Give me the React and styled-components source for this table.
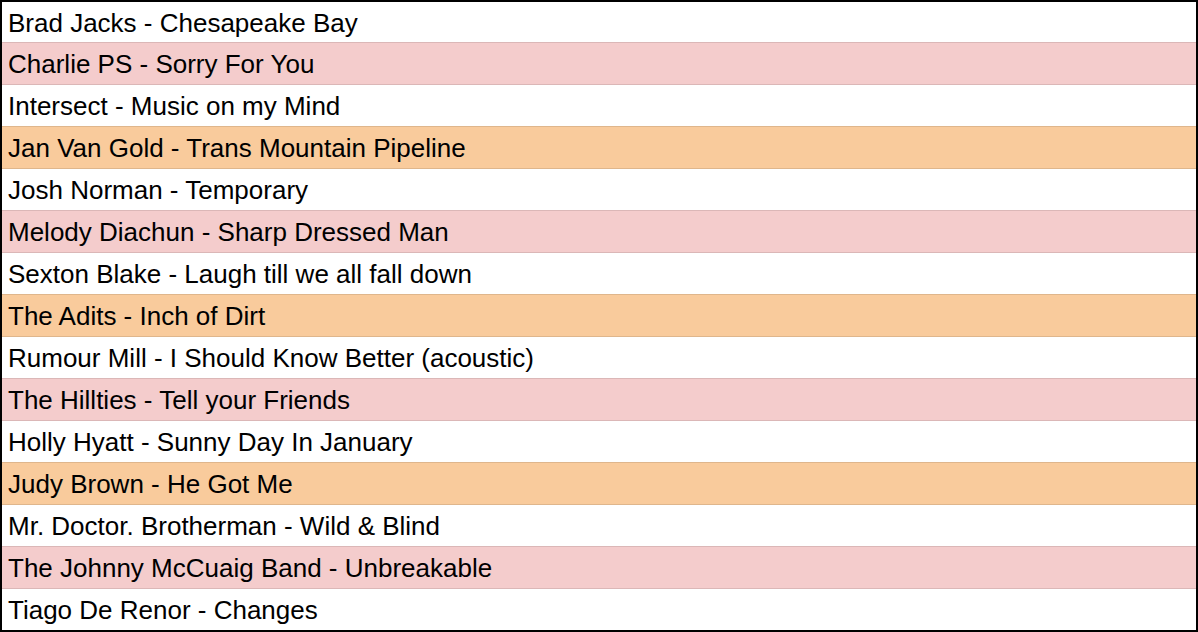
import React from "react";
import styled, { createGlobalStyle } from "styled-components";

const GlobalStyle = createGlobalStyle`
	html, body {
		margin: 0;
		padding: 0;
		background: #ffffff;
	}
`;

const Table = styled.div`
	box-sizing: border-box;
	width: 1198px;
	height: 632px;
	border: 2px solid #000000;
	display: flex;
	flex-direction: column;
	overflow: hidden;
	font-family: "Liberation Sans", Arial, sans-serif;
`;

const colors = {
	pink: "#f4cccc",
	orange: "#f9cb9c",
};

const Row = styled.div`
	box-sizing: content-box;
	flex: none;
	height: 39px;
	padding: 2px 0 0 6px;
	display: flex;
	align-items: center;
	font-size: 26px;
	color: #000000;
	white-space: nowrap;
	background: ${(p) => (p.$tone ? colors[p.$tone] : "#ffffff")};
	border-top: ${(p) => (p.$tone ? "1px solid rgba(0, 0, 0, 0.1)" : "none")};
	border-bottom: ${(p) => (p.$tone ? "1px solid rgba(0, 0, 0, 0.1)" : "none")};

	&:first-child {
		height: 38px;
	}
`;

const songs = [
	["Brad Jacks - Chesapeake Bay"],
	["Charlie PS - Sorry For You", "pink"],
	["Intersect - Music on my Mind"],
	["Jan Van Gold - Trans Mountain Pipeline", "orange"],
	["Josh Norman - Temporary"],
	["Melody Diachun - Sharp Dressed Man", "pink"],
	["Sexton Blake - Laugh till we all fall down"],
	["The Adits - Inch of Dirt", "orange"],
	["Rumour Mill - I Should Know Better (acoustic)"],
	["The Hillties - Tell your Friends", "pink"],
	["Holly Hyatt - Sunny Day In January"],
	["Judy Brown - He Got Me", "orange"],
	["Mr. Doctor. Brotherman - Wild & Blind"],
	["The Johnny McCuaig Band - Unbreakable", "pink"],
	["Tiago De Renor - Changes"],
];

export default function App() {
	return (
		<>
			<GlobalStyle />
			<Table>
				{songs.map(([title, tone]) => (
					<Row key={title} $tone={tone}>
						{title}
					</Row>
				))}
			</Table>
		</>
	);
}
